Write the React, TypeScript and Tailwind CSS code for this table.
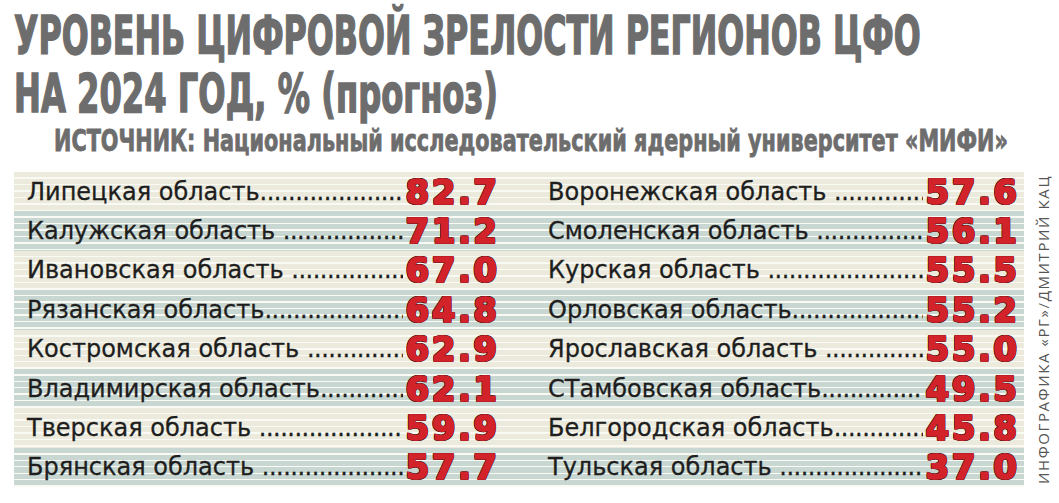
import React from "react";

const rows: [string, string, string, string][] = [
  ["Липецкая область", "82.7", "Воронежская область ", "57.6"],
  ["Калужская область ", "71.2", "Смоленская область ", "56.1"],
  ["Ивановская область ", "67.0", "Курская область ", "55.5"],
  ["Рязанская область", "64.8", "Орловская область", "55.2"],
  ["Костромская область ", "62.9", "Ярославская область ", "55.0"],
  ["Владимирская область", "62.1", "СТамбовская область", "49.5"],
  ["Тверская область ", "59.9", "Белгородская область", "45.8"],
  ["Брянская область ", "57.7", "Тульская область ", "37.0"],
];

const DOTS = ".".repeat(80);

const Cell = ({ label, value }: { label: string; value: string }) => (
  <div className="flex items-center min-w-0 h-full">
    <span className="whitespace-pre text-[#1e1e1e] [-webkit-text-stroke:0.3px_#1e1e1e]">{label}</span>
    <span className="flex-1 min-w-0 overflow-hidden whitespace-nowrap text-[#1e1e1e] tracking-[-0.5px] [-webkit-text-stroke:0.3px_#1e1e1e]">
      {DOTS}
    </span>
    <span className="font-['DejaVu_Sans',sans-serif] font-bold text-[34px] leading-none text-[#d3232a] tracking-[2.5px] mr-[-2.5px] pl-[3px] [-webkit-text-stroke:1.6px_#d3232a] [text-shadow:1px_0_#3b1212,-1px_0_#3b1212,0_1px_#3b1212,0_-1px_#3b1212,1px_1px_#3b1212,-1px_-1px_#3b1212,1px_-1px_#3b1212,-1px_1px_#3b1212]">
      {value}
    </span>
  </div>
);

const App = () => {
  return (
    <div className="w-[1059px] h-[503px] bg-white overflow-hidden relative">
      <div className="pl-[14px] pt-[7px] text-[#6d6d6d] font-['DejaVu_Sans_Condensed','DejaVu_Sans',sans-serif] font-bold">
        <h1 className="text-[53px] leading-[58px] whitespace-nowrap origin-left scale-x-[0.665] [-webkit-text-stroke:1.5px_#6d6d6d]">
          УРОВЕНЬ ЦИФРОВОЙ ЗРЕЛОСТИ РЕГИОНОВ ЦФО
        </h1>
        <h1 className="text-[53px] leading-[58px] whitespace-nowrap origin-left scale-x-[0.675] [-webkit-text-stroke:1.5px_#6d6d6d]">
          НА 2024 ГОД, % (прогноз)
        </h1>
        <p className="pl-[52px] text-[30px] leading-[36px] whitespace-nowrap origin-left scale-x-[0.77] [-webkit-text-stroke:0.8px_#6d6d6d]">
          ИСТОЧНИК: Национальный исследовательский ядерный университет «МИФИ»
        </p>
      </div>

      <div className="absolute left-[14px] top-[172px] w-[1010px] font-['DejaVu_Sans',sans-serif] text-[24px]">
        {rows.map((r, i) => (
          <div
            key={i}
            className={`h-[39.4px] grid grid-cols-[510px_500px] bg-[repeating-linear-gradient(to_bottom,transparent_0px,transparent_5px,#fafaf5_5px,#fafaf5_6.5px)] ${
              i % 2 === 0 ? "bg-[#ebeadc]" : "bg-[#c8d7d1]"
            }`}
          >
            <div className="pl-[13px] pr-[27px]">
              <Cell label={r[0]} value={r[1]} />
            </div>
            <div className="pl-[24px] pr-[7px]">
              <Cell label={r[2]} value={r[3]} />
            </div>
          </div>
        ))}
      </div>

      <div className="absolute left-[1032px] top-[172px] h-[315px] flex items-center justify-center [writing-mode:vertical-rl] rotate-180 font-['Open_Sans',sans-serif] text-[15px] tracking-[1.6px] text-[#555] whitespace-nowrap">
        ИНФОГРАФИКА «РГ»/ДМИТРИЙ КАЦ
      </div>
    </div>
  );
};

export default App;
